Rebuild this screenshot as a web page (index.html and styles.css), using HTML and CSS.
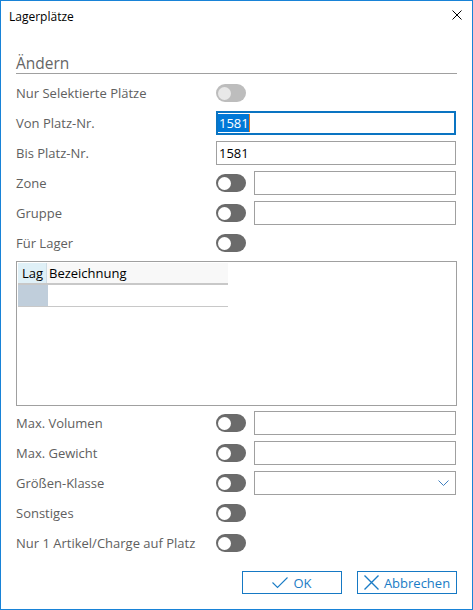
FILE: index.html
```html
<!DOCTYPE html>
<html lang="de">
<head>
<meta charset="utf-8">
<title>Lagerplätze</title>
<link rel="stylesheet" href="styles.css">
</head>
<body>
<div class="window">
  <div class="titlebar">
    <span class="title">Lagerplätze</span>
    <svg class="close" width="10" height="10" viewBox="0 0 10 10"><path d="M0.5 0.5 L9.5 9.5 M9.5 0.5 L0.5 9.5" stroke="#000" stroke-width="1" fill="none"/></svg>
  </div>
  <div class="content">
    <h2 class="section">Ändern</h2>
    <div class="form">
      <div class="row"><span class="label">Nur Selektierte Plätze</span><div class="ctrl"><span class="toggle disabled"></span></div></div>
      <div class="row"><span class="label">Von Platz-Nr.</span><div class="ctrl"><div class="field focused"><span class="sel">1581</span><span class="caret"></span></div></div></div>
      <div class="row"><span class="label">Bis Platz-Nr.</span><div class="ctrl"><div class="field">1581</div></div></div>
      <div class="row"><span class="label">Zone</span><div class="ctrl"><span class="toggle"></span><div class="field"></div></div></div>
      <div class="row"><span class="label">Gruppe</span><div class="ctrl"><span class="toggle"></span><div class="field"></div></div></div>
      <div class="row"><span class="label">Für Lager</span><div class="ctrl"><span class="toggle"></span></div></div>
      <div class="gridbox">
        <div class="grid">
          <div class="ghead">
            <div class="hcell lag">Lag</div>
            <div class="hcell bez">Bezeichnung</div>
          </div>
          <div class="grow">
            <div class="rcell lag"></div>
            <div class="rcell bez"></div>
          </div>
        </div>
      </div>
      <div class="row after"><span class="label">Max. Volumen</span><div class="ctrl"><span class="toggle"></span><div class="field"></div></div></div>
      <div class="row"><span class="label">Max. Gewicht</span><div class="ctrl"><span class="toggle"></span><div class="field"></div></div></div>
      <div class="row"><span class="label">Größen-Klasse</span><div class="ctrl"><span class="toggle"></span><div class="field combo"><svg class="chev" width="11" height="6" viewBox="0 0 11 6"><path d="M0.5 0.5 L5.5 5.5 L10.5 0.5" stroke="#3f7fc0" stroke-width="1" fill="none"/></svg></div></div></div>
      <div class="row"><span class="label">Sonstiges</span><div class="ctrl"><span class="toggle"></span></div></div>
      <div class="row"><span class="label">Nur 1 Artikel/Charge auf Platz</span><div class="ctrl"><span class="toggle"></span></div></div>
    </div>
    <div class="buttons">
      <button class="btn"><svg width="16" height="12" viewBox="0 0 16 12"><path d="M0.5 5.5 L5.5 10.5 L15.5 0.5" stroke="#1a7cc6" stroke-width="1.1" fill="none"/></svg><span>OK</span></button>
      <button class="btn"><svg width="15" height="15" viewBox="0 0 15 15"><path d="M0.5 0.5 L14.5 14.5 M14.5 0.5 L0.5 14.5" stroke="#1a7cc6" stroke-width="1.4" fill="none"/></svg><span>Abbrechen</span></button>
    </div>
  </div>
</div>
</body>
</html>
```
FILE: styles.css
```css
* { box-sizing: border-box; }
html, body { margin: 0; padding: 0; background: #fff; }
body { font-family: "Open Sans", "Noto Sans", sans-serif; }

.window {
  width: 473px;
  height: 610px;
  border: 1px solid #1883d7;
  background: #fff;
  display: flex;
  flex-direction: column;
}

.titlebar {
  height: 30px;
  display: flex;
  align-items: center;
  justify-content: space-between;
  padding: 0 10px 0 8px;
}
.title { font-size: 12px; color: #000; }
.close { display: block; margin-top: -2px; }

.content { padding: 0 15px; }

.section {
  margin: 22px 0 0 0;
  height: 21px;
  font-size: 15.5px;
  font-weight: normal;
  line-height: 20px;
  color: #666;
  border-bottom: 1px solid #a0a0a0;
}

.form {
  margin-top: 7px;
  display: flex;
  flex-direction: column;
  gap: 6px;
}

.row {
  display: grid;
  grid-template-columns: 200px 240px;
  height: 24px;
  align-items: center;
}
.row.after { margin-top: -1px; }

.label {
  font-size: 13px;
  line-height: 24px;
  color: #606060;
  white-space: nowrap;
}

.ctrl {
  display: flex;
  align-items: center;
  gap: 8px;
  height: 24px;
}

.toggle {
  position: relative;
  flex: none;
  width: 30px;
  height: 18px;
  border-radius: 9px;
  background: #6b6b6b;
}
.toggle::after {
  content: "";
  position: absolute;
  left: 2px;
  top: 2.5px;
  width: 13px;
  height: 13px;
  border-radius: 50%;
  background: #fff;
}
.toggle.disabled { background: #bdbdbd; }
.toggle.disabled::after { background: #e8e8e8; }

.field {
  position: relative;
  flex: 1;
  height: 24px;
  border: 1px solid #a0a0a0;
  font-size: 13px;
  line-height: 22px;
  padding-left: 2px;
  color: #000;
  display: flex;
  align-items: center;
}
.field.focused {
  border: 2px solid #0a74c2;
  padding-left: 0;
}
.sel {
  background: #0078d7;
  color: #fff;
  line-height: 18px;
  padding: 0 0 0 1px;
}
.caret {
  width: 1px;
  height: 18px;
  background: #e5761f;
}
.combo { justify-content: flex-end; padding-right: 6px; }
.chev { display: block; }

.gridbox {
  height: 145px;
  border: 1px solid #a0a0a0;
  padding: 1px;
}
.grid { width: 210px; }
.ghead {
  display: flex;
  height: 22px;
  border-bottom: 2px solid #c8c8c8;
}
.hcell {
  font-size: 13px;
  line-height: 20px;
  color: #000;
  white-space: nowrap;
}
.hcell.lag {
  width: 29px;
  background: #dff0f7;
  padding-left: 4px;
  border-right: 1px solid #cfdde5;
}
.hcell.bez {
  flex: 1;
  background: #f8f8f8;
  padding-left: 2px;
}
.grow {
  display: flex;
  height: 22px;
  border-bottom: 1px solid #c8c8c8;
}
.rcell.lag { width: 30px; background: #c0cedb; }
.rcell.bez { flex: 1; background: #fff; }

.buttons {
  margin-top: 16px;
  display: flex;
  justify-content: flex-end;
  gap: 15px;
}
.btn {
  width: 100px;
  height: 23px;
  border: 1px solid #1679c4;
  background: #fff;
  color: #1a7cc6;
  font-family: "Open Sans", "Noto Sans", sans-serif;
  font-size: 13px;
  display: flex;
  align-items: center;
  justify-content: center;
  gap: 5px;
  padding: 0;
}
.btn svg { display: block; }
```
